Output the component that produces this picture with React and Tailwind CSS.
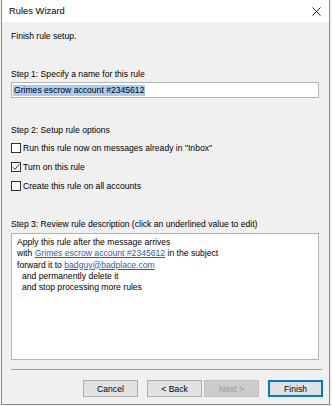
import React from 'react';

const font = { fontFamily: '"Liberation Sans", Arial, sans-serif' };

function Check({ checked, label }) {
  return (
    <div className="flex items-center h-[13px]">
      <div className="w-[10px] h-[10px] border border-[#333] bg-white flex items-center justify-center">
        {checked && (
          <svg width="8" height="8" viewBox="0 0 8 8">
            <path d="M0.8 4.2 L3 6.4 L7.3 1.2" fill="none" stroke="#333" strokeWidth="1" />
          </svg>
        )}
      </div>
      <span className="ml-[2px]">{label}</span>
    </div>
  );
}

function Btn({ children, primary, disabled, className = '' }) {
  return (
    <div
      className={`w-[55px] h-[17px] flex items-center justify-center ${
        disabled
          ? 'bg-[#cccccc] border border-[#bfbfbf] text-[#9a9a9a]'
          : primary
          ? 'bg-[#e1e1e1] border-2 border-[#0078d7] text-black'
          : 'bg-[#e1e1e1] border border-[#adadad] text-black'
      } ${className}`}
    >
      {children}
    </div>
  );
}

export default function App() {
  return (
    <div className="w-[332px] h-[406px] bg-[#f3f3f3] overflow-hidden text-[8.6px] leading-[12px] text-black" style={font}>
      <div className="ml-[1px] w-[329px] h-[405px] border-l border-r border-b border-[#8a8a8a] bg-[#f0f0f0] flex flex-col">
        {/* title bar */}
        <div className="h-[22px] bg-white flex items-center justify-between pl-[7px] pr-[8px] shrink-0">
          <span className="text-[9.4px]">Rules Wizard</span>
          <svg width="9" height="9" viewBox="0 0 9 9">
            <path d="M0.5 0.5 L8.5 8.5 M8.5 0.5 L0.5 8.5" stroke="#222" strokeWidth="1" />
          </svg>
        </div>

        <div className="pl-[9px] flex flex-col">
          <div className="mt-[8px] h-[12px]">Finish rule setup.</div>

          <div className="mt-[26px] h-[12px]">Step 1: Specify a name for this rule</div>
          <div className="mt-[2px] w-[308px] h-[16px] border border-[#b4b4b4] bg-white flex items-center pl-[1px]">
            <span className="bg-[#a8cdf0] px-[1px] leading-[11px]">Grimes escrow account #2345612</span>
          </div>

          <div className="mt-[26px] h-[12px]">Step 2: Setup rule options</div>
          <div className="mt-[5px] flex flex-col gap-[6px]">
            <Check label={'Run this rule now on messages already in "Inbox"'} />
            <Check checked label="Turn on this rule" />
            <Check label="Create this rule on all accounts" />
          </div>

          <div className="mt-[26px] h-[12px]">Step 3: Review rule description (click an underlined value to edit)</div>
          <div className="mt-[3px] w-[308px] h-[127px] border border-[#b4b4b4] bg-white pl-[5px] pt-[3px] leading-[11.3px]">
            <div>Apply this rule after the message arrives</div>
            <div>
              with <span className="text-[#2f5ea8] underline">Grimes escrow account #2345612</span> in the subject
            </div>
            <div>
              forward it to <span className="text-[#2f5ea8] underline">badguy@badplace.com</span>
            </div>
            <div className="pl-[5px]">and permanently delete it</div>
            <div className="pl-[5px]">and stop processing more rules</div>
          </div>

          <div className="mt-[9px] w-[311px] h-px bg-[#a0a0a0]" />

          <div className="mt-[10px] w-[312px] flex justify-end">
            <Btn>Cancel</Btn>
            <Btn className="ml-[9px]">&lt; Back</Btn>
            <Btn disabled className="ml-[2px]">Next &gt;</Btn>
            <Btn primary className="ml-[9px]">Finish</Btn>
          </div>
        </div>
      </div>
    </div>
  );
}
